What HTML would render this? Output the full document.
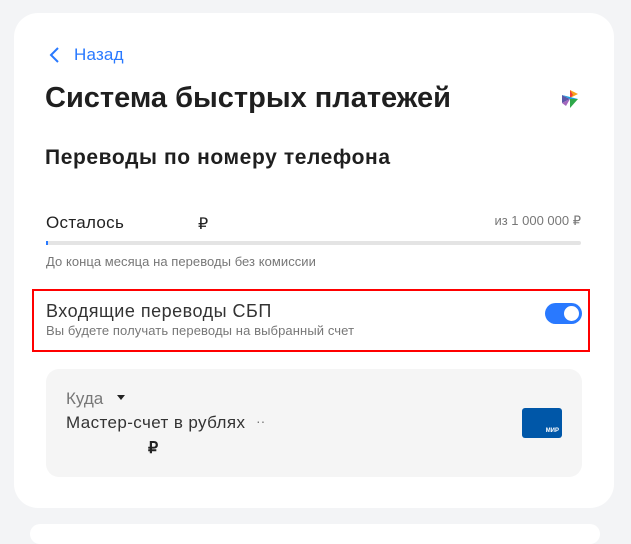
<!DOCTYPE html>
<html><head><meta charset="utf-8"><style>
*{margin:0;padding:0;box-sizing:border-box}
body{width:631px;height:526px;background:#f3f4f6;font-family:"Liberation Sans",sans-serif;position:relative;overflow:hidden;color:#222}
.card{position:absolute;left:14px;top:13px;width:600px;height:495px;background:#fff;border-radius:24px}
.card2{position:absolute;left:30px;top:524px;width:570px;height:20px;background:#fff;border-radius:20px}
.a{position:absolute;white-space:nowrap}
</style></head><body>
<div class="card"></div>
<div class="card2"></div>
<svg class="a" style="left:48px;top:46px" width="12" height="18" viewBox="0 0 12 18"><path d="M10 2 L3 9 L10 16" fill="none" stroke="#2979ff" stroke-width="2"/></svg>
<div class="a" style="left:74px;top:45px;font-size:17px;color:#2979ff;letter-spacing:0.2px">Назад</div>
<div class="a" style="left:45px;top:82px;font-size:29px;font-weight:bold;color:#1f1f1f;letter-spacing:0px">Система быстрых платежей</div>
<svg class="a" style="left:562px;top:90px" width="17" height="18" viewBox="0 0 17 18">
<polygon points="8,0 16,4 8,8" fill="#f7a21b"/><polygon points="8,0 8,8 11,5" fill="#ef3b3b"/>
<polygon points="0,5 8,9 0,13" fill="#5b57a6"/><polygon points="0,5 16,9 8,9" fill="#1ba0e0"/>
<polygon points="8,9 16,9 8,18" fill="#2fa84a"/><polygon points="0,13 8,9 4,16" fill="#a366bd"/>
</svg>
<div class="a" style="left:45px;top:146px;font-size:21px;font-weight:bold;color:#1f1f1f;letter-spacing:0.6px">Переводы по номеру телефона</div>
<div class="a" style="left:46px;top:213px;font-size:17px;letter-spacing:0.3px">Осталось</div>
<div class="a" style="left:198px;top:214px;font-size:16px">₽</div>
<div class="a" style="right:50px;top:213px;font-size:13px;color:#777">из 1 000 000 ₽</div>
<div class="a" style="left:46px;top:241px;width:535px;height:4px;background:#e4e4e4;border-radius:2px"><div style="width:2px;height:4px;background:#2979ff"></div></div>
<div class="a" style="left:46px;top:254px;font-size:13px;color:#777;letter-spacing:0.05px">До конца месяца на переводы без комиссии</div>
<div class="a" style="left:32px;top:289px;width:558px;height:63px;border:2px solid #f00"></div>
<div class="a" style="left:46px;top:301px;font-size:18px;color:#333;letter-spacing:0.5px">Входящие переводы СБП</div>
<div class="a" style="left:46px;top:323px;font-size:13px;color:#777;letter-spacing:0.1px">Вы будете получать переводы на выбранный счет</div>
<div class="a" style="left:545px;top:303px;width:37px;height:21px;background:#2979ff;border-radius:11px"><div style="position:absolute;right:3px;top:3px;width:15px;height:15px;border-radius:50%;background:#fff"></div></div>
<div class="a" style="left:46px;top:369px;width:536px;height:108px;background:#f5f5f5;border-radius:13px"></div>
<div class="a" style="left:66px;top:389px;font-size:17px;color:#777">Куда</div>
<svg class="a" style="left:117px;top:395px" width="8" height="6" viewBox="0 0 8 6"><polygon points="0,0 8,0 4,5" fill="#222"/></svg>
<div class="a" style="left:66px;top:413px;font-size:17px;color:#333;letter-spacing:0.4px">Мастер-счет в рублях</div>
<div class="a" style="left:256px;top:413px;font-size:14px;color:#777">··</div>
<div class="a" style="left:148px;top:438px;font-size:16px;font-weight:bold">₽</div>
<div class="a" style="left:522px;top:408px;width:40px;height:30px;background:#0057a8;border-radius:3px"><div style="position:absolute;right:3px;bottom:4px;font-size:6px;font-weight:bold;color:#fff">МИР</div></div>
</body></html>
